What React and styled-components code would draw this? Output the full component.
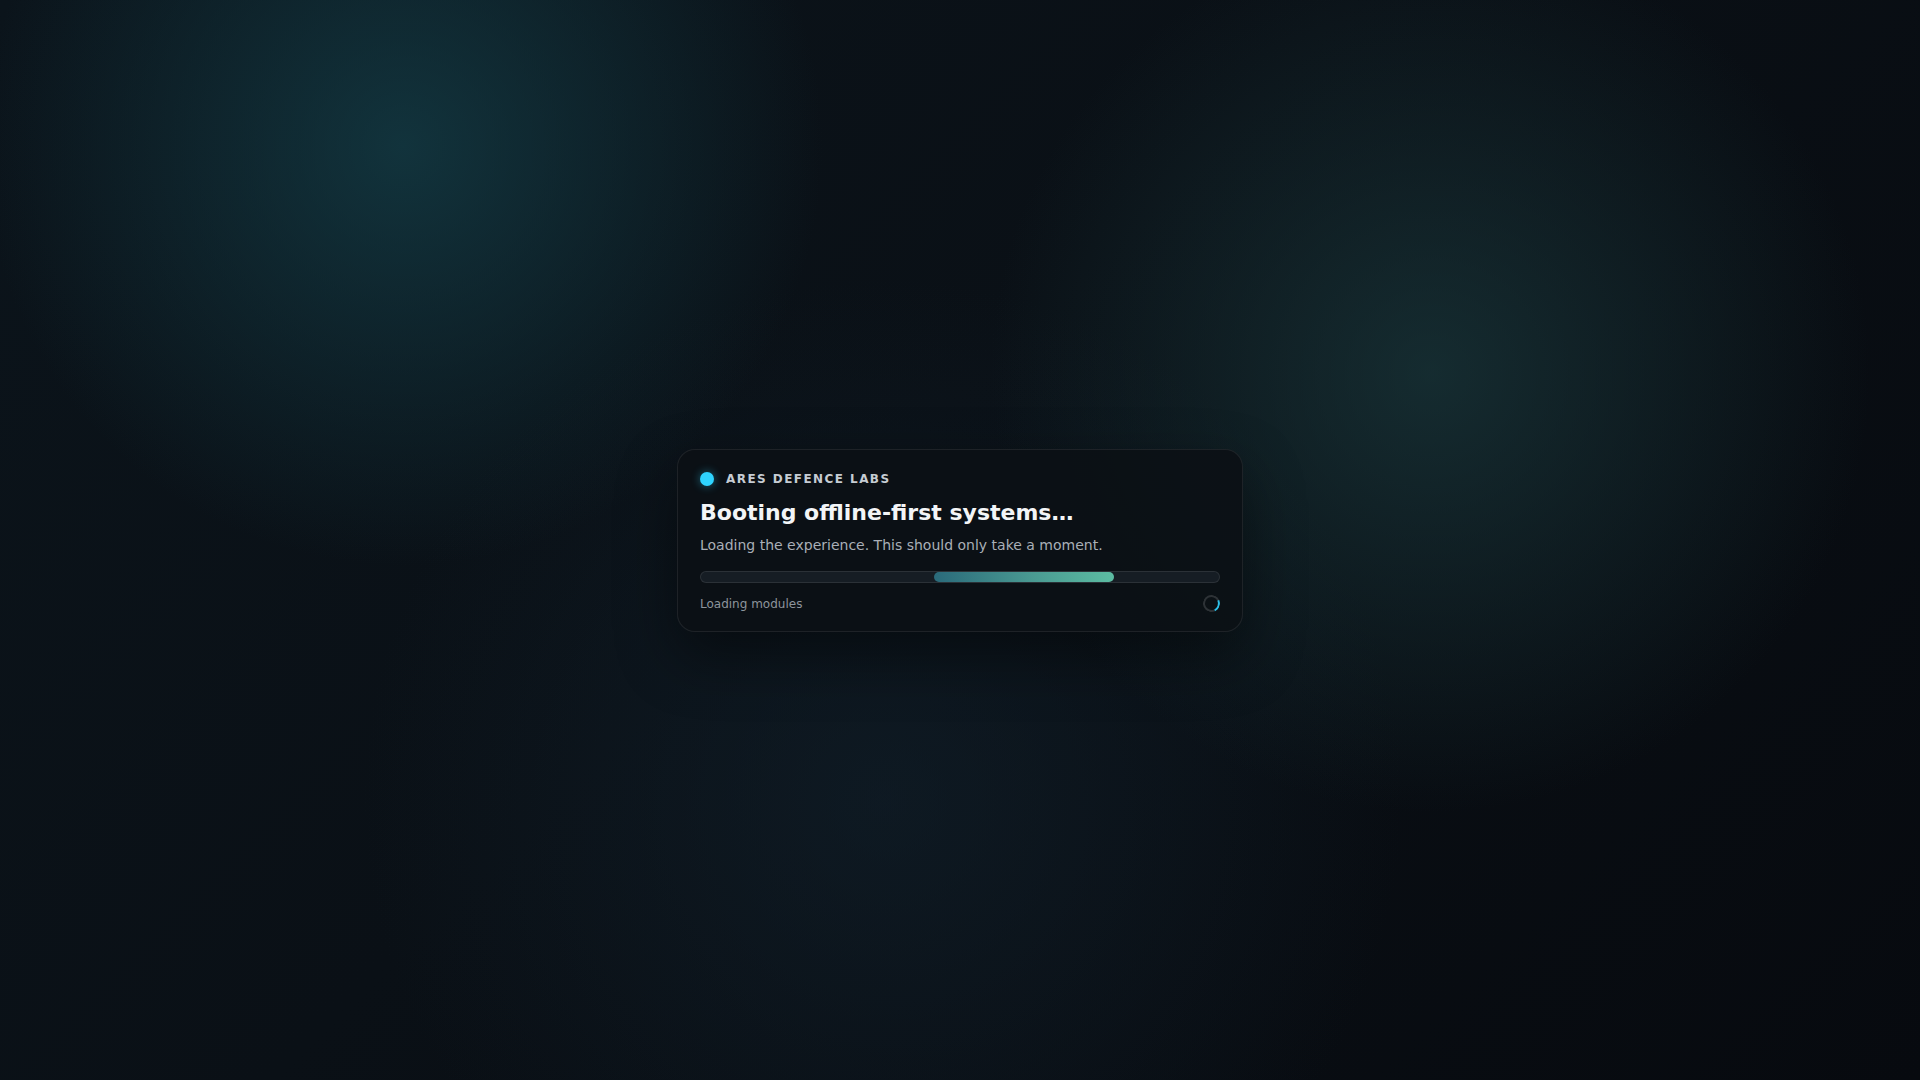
import React from "react";
import styled, { createGlobalStyle } from "styled-components";

const GlobalStyle = createGlobalStyle`
  html, body, #root {
    margin: 0;
    padding: 0;
    height: 100%;
  }
  body {
    background: #0a1016;
    font-family: "DejaVu Sans", "Noto Sans", sans-serif;
    color: #e8ecf0;
  }
  * {
    box-sizing: border-box;
  }
`;

const Screen = styled.div({
  minHeight: "100vh",
  display: "flex",
  alignItems: "center",
  justifyContent: "center",
  background: [
    "radial-gradient(circle at 21% 13.5%, rgba(20, 62, 72, 0.75) 0, rgba(20, 62, 72, 0) 420px)",
    "radial-gradient(circle at 74.5% 34.5%, rgba(26, 56, 60, 0.7) 0, rgba(26, 56, 60, 0) 440px)",
    "radial-gradient(circle at 46% 74%, rgba(18, 34, 46, 0.55) 0, rgba(18, 34, 46, 0) 520px)",
    "linear-gradient(135deg, #0b141b 0%, #0a1016 45%, #070a0f 100%)",
  ].join(", "),
});

const Card = styled.div({
  width: "566px",
  padding: "21px 22px 18px",
  background: "rgba(11, 16, 21, 0.88)",
  border: "1px solid rgba(255, 255, 255, 0.08)",
  borderRadius: "18px",
  boxShadow: "0 24px 60px rgba(0, 0, 0, 0.45)",
});

const Brand = styled.div({
  display: "flex",
  alignItems: "center",
  gap: "12px",
  height: "16px",
});

const Dot = styled.span({
  width: "14px",
  height: "14px",
  borderRadius: "50%",
  background: "#2fd4ff",
  boxShadow: "0 0 10px rgba(47, 212, 255, 0.45)",
});

const BrandName = styled.span({
  fontSize: "12px",
  fontWeight: 700,
  letterSpacing: "0.12em",
  color: "#c6ccd3",
  textTransform: "uppercase",
});

const Title = styled.h1({
  margin: "13px 0 0",
  fontSize: "22px",
  lineHeight: "26px",
  fontWeight: 700,
  color: "#f3f5f7",
});

const Subtitle = styled.p({
  margin: "9px 0 0",
  fontSize: "14px",
  lineHeight: "21px",
  color: "#a9afb7",
});

const Track = styled.div({
  position: "relative",
  marginTop: "15px",
  height: "12px",
  borderRadius: "999px",
  background: "#161d24",
  border: "1px solid rgba(255, 255, 255, 0.09)",
  overflow: "hidden",
});

const Fill = styled.div({
  position: "absolute",
  top: 0,
  bottom: 0,
  borderRadius: "999px",
  background: "linear-gradient(90deg, #2a6a7a 0%, #4a9a92 55%, #5cbca2 100%)",
});

const Footer = styled.div({
  marginTop: "12px",
  display: "flex",
  alignItems: "center",
  justifyContent: "space-between",
  height: "18px",
});

const Status = styled.span({
  fontSize: "12px",
  color: "#8d949c",
});

const Spinner = styled.span({
  width: "17px",
  height: "17px",
  borderRadius: "50%",
  border: "2px solid rgba(255, 255, 255, 0.14)",
  borderRightColor: "#2cbfe8",
  transform: "rotate(20deg)",
});

export default function App() {
  const progress = { start: 45, width: 34.8 };
  return (
    <>
      <GlobalStyle />
      <Screen>
        <Card>
          <Brand>
            <Dot />
            <BrandName>Ares Defence Labs</BrandName>
          </Brand>
          <Title>Booting offline-first systems…</Title>
          <Subtitle>
            Loading the experience. This should only take a moment.
          </Subtitle>
          <Track>
            <Fill
              style={{ left: `${progress.start}%`, width: `${progress.width}%` }}
            />
          </Track>
          <Footer>
            <Status>Loading modules</Status>
            <Spinner />
          </Footer>
        </Card>
      </Screen>
    </>
  );
}
